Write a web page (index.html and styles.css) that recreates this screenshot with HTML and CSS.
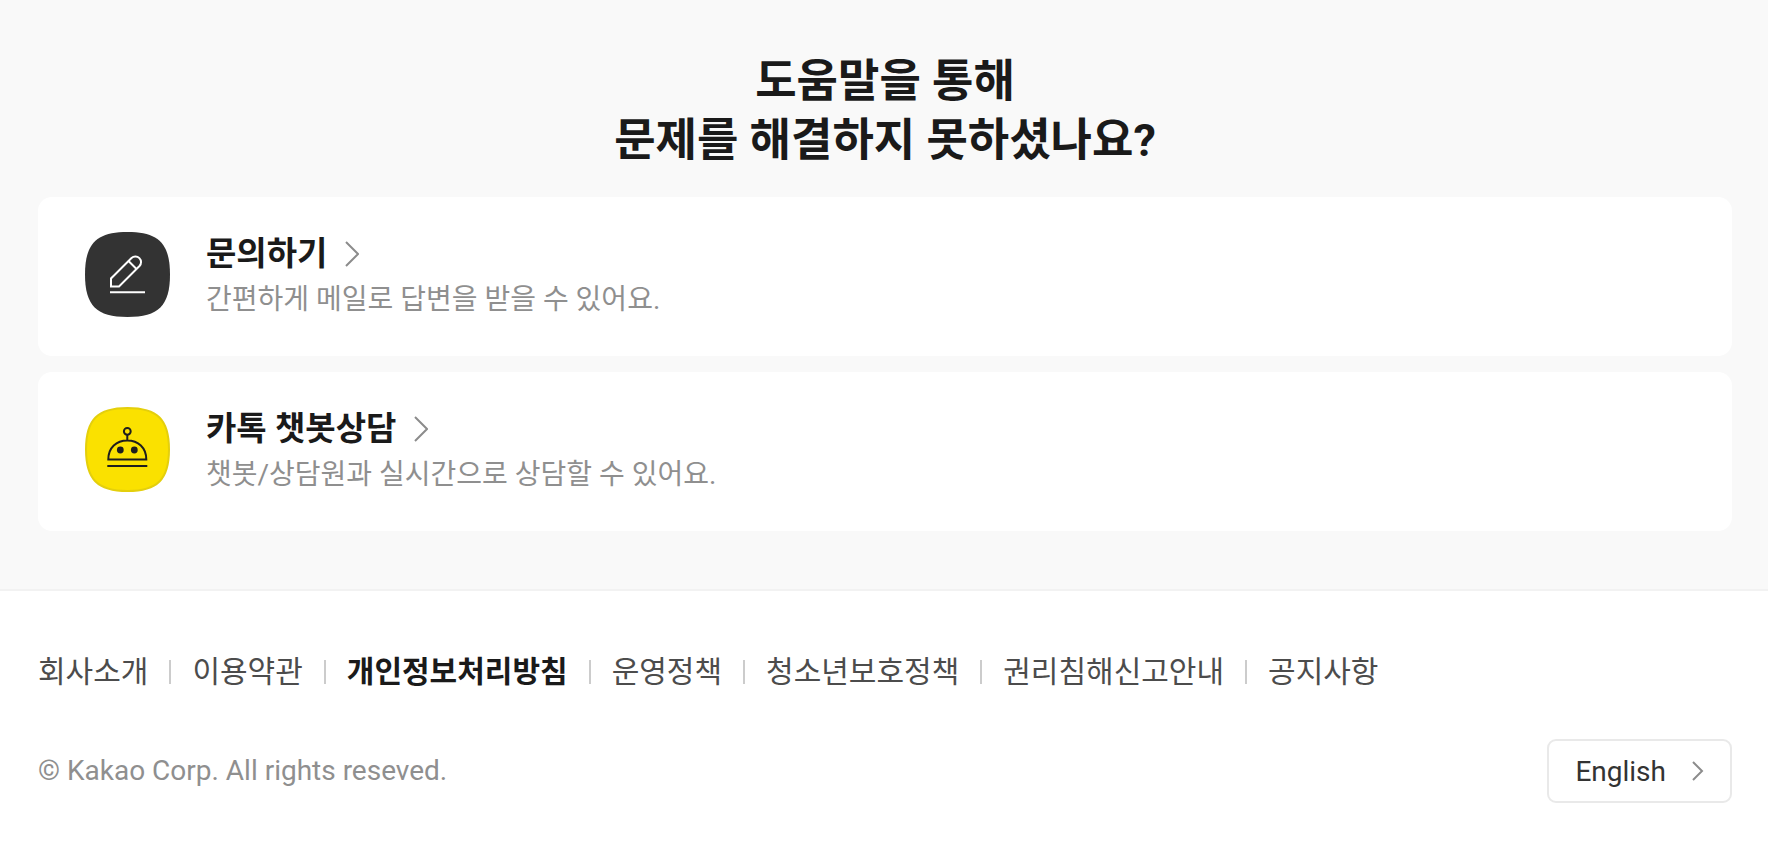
FILE: index.html
```html
<!DOCTYPE html>
<html lang="ko">
<head>
<meta charset="utf-8">
<meta name="viewport" content="width=device-width, initial-scale=1">
<title>고객센터</title>
<link rel="stylesheet" href="styles.css">
</head>
<body>
<main class="help">
  <h2 class="help-title">도움말을 통해<br>문제를 해결하지 못하셨나요?</h2>
  <ul class="card-list">
    <li>
      <a class="card" href="#">
        <svg class="card-icon" viewBox="0 0 85 85" aria-hidden="true">
          <path d="M42.500 0C73.500 0 85 11.500 85 42.500S73.500 85 42.500 85 0 73.500 0 42.500 11.500 0 42.500 0Z" fill="#333"/>
          <g fill="none" stroke="#fff" stroke-width="2">
            <path d="M26 54.500V46.500L46.500 26A5.660 5.660 0 0 1 54.500 34L34 54.500Z"/>
            <path d="M43.500 29L51.500 37M25 60.300H60"/>
          </g>
        </svg>
        <span class="card-text">
          <strong class="card-name">문의하기
            <svg class="arrow" viewBox="0 0 14 26" aria-hidden="true"><path d="M1 1L13 13L1 25"/></svg>
          </strong>
          <span class="card-desc">간편하게 메일로 답변을 받을 수 있어요.</span>
        </span>
      </a>
    </li>
    <li>
      <a class="card" href="#">
        <svg class="card-icon" viewBox="0 0 85 85" aria-hidden="true">
          <path d="M42.500 1C72.500 1 84 12.500 84 42.500S72.500 84 42.500 84 1 72.500 1 42.500 12.500 1 42.500 1Z" fill="#fae100" stroke="#e4cf0c" stroke-width="2"/>
          <g fill="none" stroke="#1e1e1e" stroke-width="2">
            <circle cx="42.300" cy="24.300" r="3.400"/>
            <path d="M42.300 27.700V33.500M23.300 52.500C23.300 40.500 31.500 33.500 42.300 33.500S61.300 40.500 61.300 52.500ZM22.300 59H62.300"/>
          </g>
          <circle cx="35.300" cy="43" r="3.400" fill="#1e1e1e"/>
          <circle cx="49.300" cy="43" r="3.400" fill="#1e1e1e"/>
        </svg>
        <span class="card-text">
          <strong class="card-name">카톡 챗봇상담
            <svg class="arrow" viewBox="0 0 14 26" aria-hidden="true"><path d="M1 1L13 13L1 25"/></svg>
          </strong>
          <span class="card-desc">챗봇/상담원과 실시간으로 상담할 수 있어요.</span>
        </span>
      </a>
    </li>
  </ul>
</main>
<footer class="footer">
  <ul class="links">
    <li><a href="#">회사소개</a></li>
    <li><a href="#">이용약관</a></li>
    <li><a class="strong" href="#">개인정보처리방침</a></li>
    <li><a href="#">운영정책</a></li>
    <li><a href="#">청소년보호정책</a></li>
    <li><a href="#">권리침해신고안내</a></li>
    <li><a href="#">공지사항</a></li>
  </ul>
  <div class="bottom">
    <small class="copyright">© Kakao Corp. All rights reseved.</small>
    <button class="lang" type="button">English
      <svg class="lang-arrow" viewBox="0 0 12 20" aria-hidden="true"><path d="M1 1L10 10L1 19"/></svg>
    </button>
  </div>
</footer>
</body>
</html>
```

FILE: styles.css
```css
* {
  box-sizing: border-box;
}

body {
  margin: 0;
  background: #fff;
  color: #1a1a1a;
  font-family: Roboto, "Noto Sans CJK KR", sans-serif;
}

ul {
  margin: 0;
  padding: 0;
  list-style: none;
}

a {
  color: inherit;
  text-decoration: none;
}

.help {
  padding: 52px 36px 58px 38px;
  border-bottom: 2px solid #f2f2f2;
  background: #f9f9f9;
}

.help-title {
  margin: 0 0 27px;
  font-size: 45px;
  font-weight: 700;
  line-height: 59px;
  text-align: center;
}

.card-list {
  display: grid;
  gap: 16px;
}

.card {
  display: flex;
  align-items: flex-start;
  gap: 36px;
  padding: 35px 47px 32px;
  border-radius: 14px;
  background: #fff;
}

.card-icon {
  flex: none;
  width: 85px;
  height: 85px;
}

.card-text {
  display: flex;
  flex-direction: column;
}

.card-name {
  display: flex;
  align-items: center;
  gap: 18px;
  font-size: 33px;
  font-weight: 700;
  line-height: 44px;
}

.card-desc {
  color: #8f8f8f;
  font-size: 28px;
  line-height: 48px;
}

.arrow,
.lang-arrow {
  flex: none;
  fill: none;
  stroke: #8c8c8c;
  stroke-width: 2;
}

.arrow {
  width: 14px;
  height: 26px;
}

.footer {
  padding: 57px 36px 64px 38px;
}

.links {
  display: flex;
  flex-wrap: wrap;
  color: #4c4c4c;
  font-size: 30px;
  line-height: 48px;
}

.links li {
  display: flex;
  align-items: center;
}

.links li + li::before {
  width: 2px;
  height: 24px;
  margin: 0 21px;
  background: #ccc;
  content: "";
}

.strong {
  color: #1a1a1a;
  font-weight: 700;
}

.bottom {
  display: flex;
  align-items: center;
  justify-content: space-between;
  margin-top: 43px;
}

.copyright {
  color: #8f8f8f;
  font-size: 28px;
  line-height: 40px;
}

.lang {
  display: flex;
  align-items: center;
  gap: 26px;
  height: 64px;
  padding: 0 26px;
  border: 2px solid #e9e9e9;
  border-radius: 9px;
  background: #fff;
  color: #333;
  font: inherit;
  font-size: 28px;
}

.lang-arrow {
  width: 12px;
  height: 20px;
}
```
